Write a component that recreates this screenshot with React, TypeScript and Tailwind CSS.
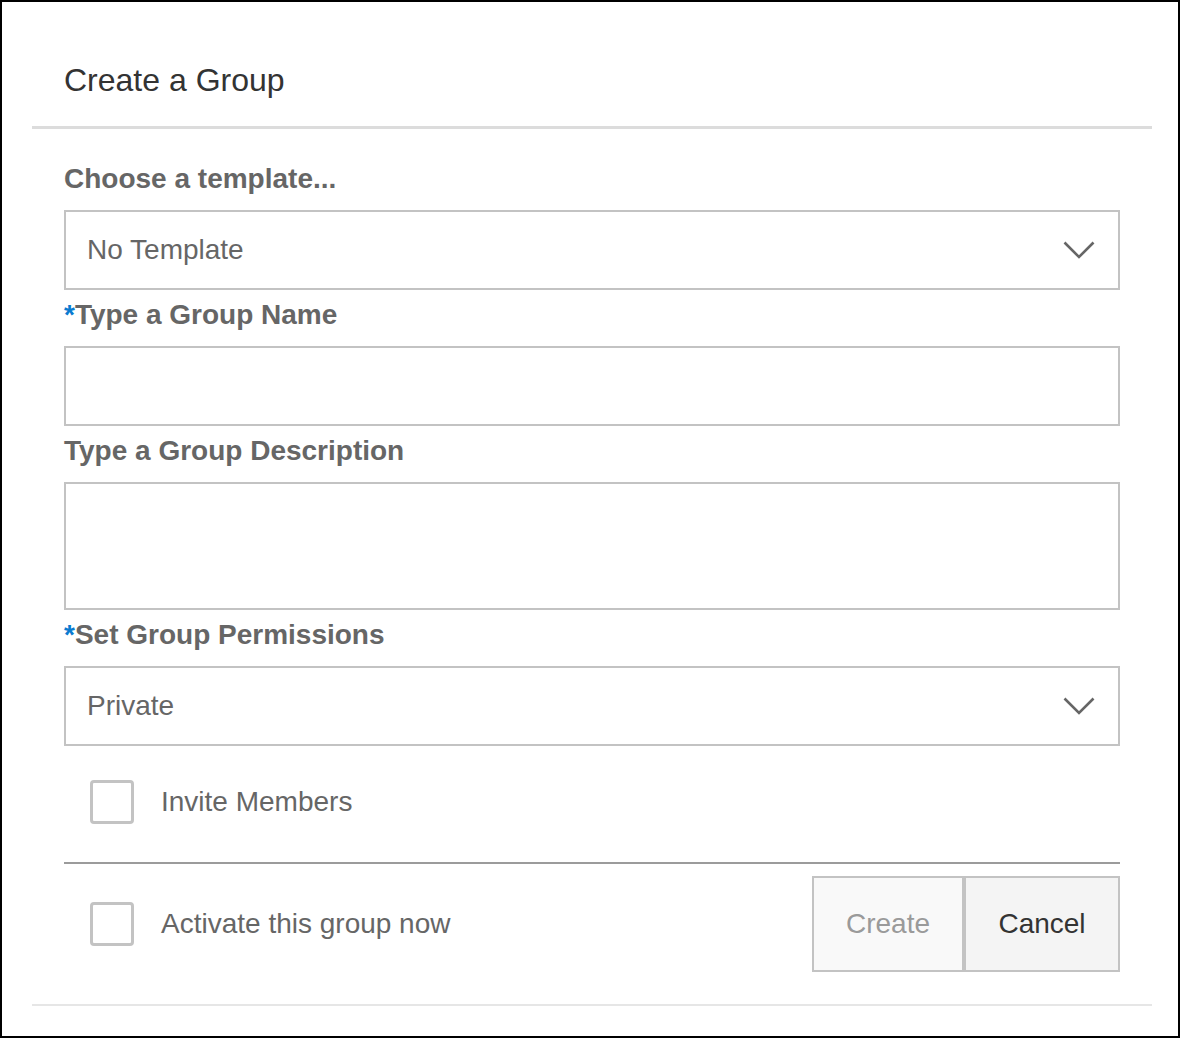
import { useState } from 'react'

const font = { fontFamily: '"Liberation Sans", Arial, Helvetica, sans-serif' }

const Chevron = () => (
  <svg width="32" height="18" viewBox="0 0 32 18" fill="none" className="shrink-0">
    <path d="M1.5 1.5 L16 16 L30.5 1.5" stroke="#666666" strokeWidth="2.6" />
  </svg>
)

const Label = ({ text, required }: { text: string; required?: boolean }) => (
  <div className="h-8 leading-8 text-[28px] font-bold text-[#666666] whitespace-nowrap">
    {required && <span className="text-[#0a7bd0]">*</span>}
    {text}
  </div>
)

const SelectBox = ({ value }: { value: string }) => (
  <div className="h-20 border-2 border-[#c3c3c3] bg-white flex items-center justify-between pl-[21px] pr-[23px]">
    <span className="text-[28px] text-[#666666]">{value}</span>
    <Chevron />
  </div>
)

const Checkbox = ({ label, checked, onToggle }: { label: string; checked: boolean; onToggle: () => void }) => (
  <button type="button" onClick={onToggle} className="flex items-center gap-[27px] pl-[26px] cursor-pointer">
    <span className="w-11 h-11 rounded-[4px] border-[3px] border-[#c3c3c3] bg-white flex items-center justify-center">
      {checked && <span className="w-5 h-5 bg-[#666666]" />}
    </span>
    <span className="text-[28px] text-[#666666]">{label}</span>
  </button>
)

export default function App() {
  const [invite, setInvite] = useState(false)
  const [activate, setActivate] = useState(false)

  return (
    <div style={font} className="w-[1180px] h-[1038px] border-2 border-black bg-white pl-[30px] pr-[26px]">
      {/* header */}
      <div className="h-[127px] pt-[58px] pl-[32px] border-b-[3px] border-[#dcdcdc]">
        <h1 className="text-[32px] leading-[40px] text-[#333333]">Create a Group</h1>
      </div>

      {/* form body */}
      <div className="px-8 pt-[34px]">
        <Label text="Choose a template..." />
        <div className="mt-[15px]">
          <SelectBox value="No Template" />
        </div>

        <div className="mt-[9px]">
          <Label text="Type a Group Name" required />
        </div>
        <input className="mt-[15px] block w-full h-20 border-2 border-[#c3c3c3] outline-none px-[21px] text-[28px] text-[#666666]" />

        <div className="mt-[9px]">
          <Label text="Type a Group Description" />
        </div>
        <textarea className="mt-[15px] block w-full h-32 border-2 border-[#c3c3c3] outline-none resize-none px-[21px] py-3 text-[28px] text-[#666666]" />

        <div className="mt-[9px]">
          <Label text="Set Group Permissions" required />
        </div>
        <div className="mt-[15px]">
          <SelectBox value="Private" />
        </div>

        <div className="mt-[34px] h-11 flex items-center">
          <Checkbox label="Invite Members" checked={invite} onToggle={() => setInvite(!invite)} />
        </div>

        <div className="mt-[38px] h-[2px] bg-[#9b9b9b]" />

        {/* footer row */}
        <div className="mt-3 flex items-center justify-between">
          <Checkbox label="Activate this group now" checked={activate} onToggle={() => setActivate(!activate)} />
          <div className="flex">
            <button className="w-[152px] h-24 border-2 border-[#c3c3c3] bg-[#f9f9f9] text-[28px] text-[#9a9a9a]">
              Create
            </button>
            <button className="w-[156px] h-24 border-2 border-[#c3c3c3] bg-[#f4f4f4] text-[28px] text-[#333333]">
              Cancel
            </button>
          </div>
        </div>
      </div>

      <div className="mt-8 h-[2px] bg-[#e6e6e6]" />
    </div>
  )
}
